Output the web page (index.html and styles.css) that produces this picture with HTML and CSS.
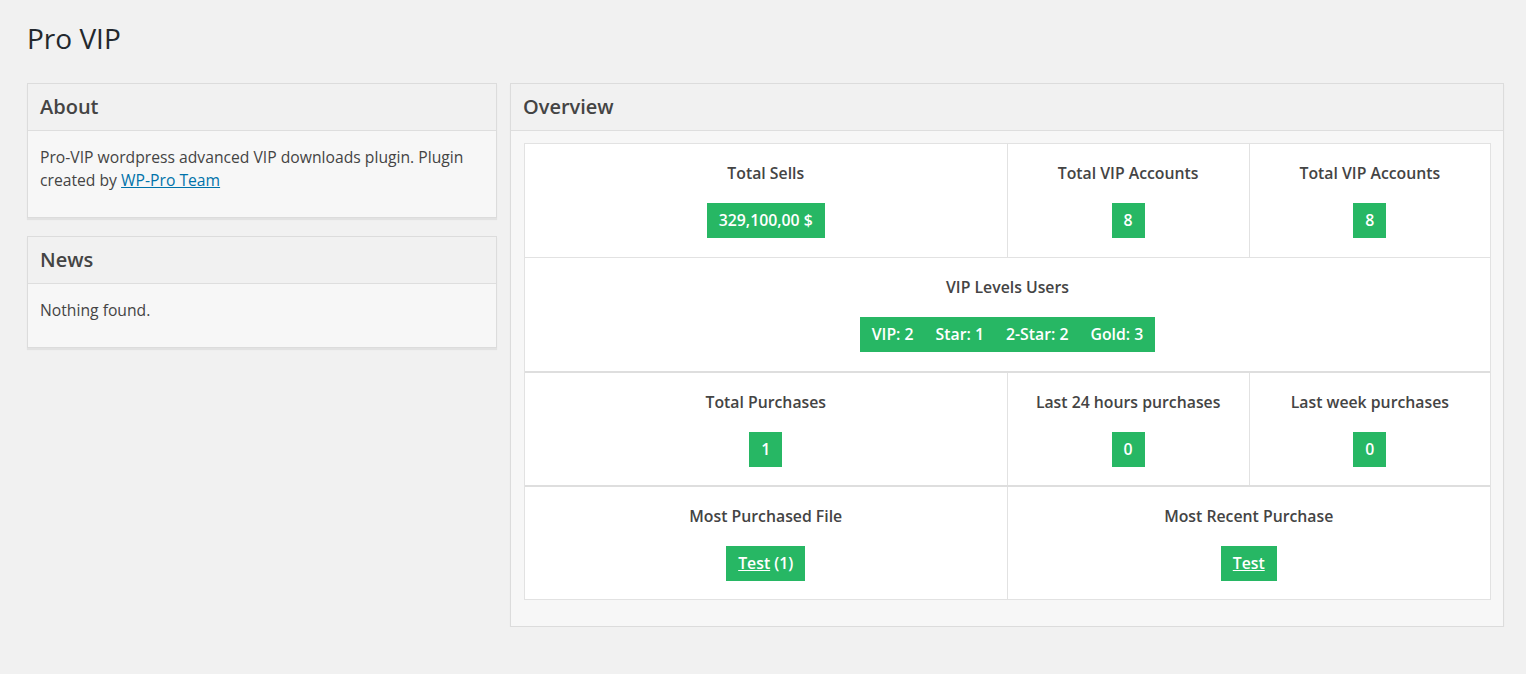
FILE: index.html
```html
<!DOCTYPE html>
<html>
<head>
<meta charset="utf-8">
<link rel="stylesheet" href="styles.css">
</head>
<body>
<div class="wrap">
  <h1 class="page-title">Pro VIP</h1>
  <div class="columns">
    <div class="side">
      <div class="box">
        <div class="box-head">About</div>
        <div class="box-body">Pro-VIP wordpress advanced VIP downloads plugin. Plugin created by <a href="#">WP-Pro Team</a></div>
      </div>
      <div class="box">
        <div class="box-head">News</div>
        <div class="box-body">Nothing found.</div>
      </div>
    </div>
    <div class="main">
      <div class="box">
        <div class="box-head">Overview</div>
        <div class="box-body overview">
          <div class="stats">
            <div class="row row-first">
              <div class="cell half"><div class="label">Total Sells</div><span class="badge">329,100,00 $</span></div>
              <div class="cell quarter"><div class="label">Total VIP Accounts</div><span class="badge">8</span></div>
              <div class="cell quarter"><div class="label">Total VIP Accounts</div><span class="badge">8</span></div>
            </div>
            <div class="row">
              <div class="cell full"><div class="label">VIP Levels Users</div><span class="badge levels"><span>VIP: 2</span><span>Star: 1</span><span>2-Star: 2</span><span>Gold: 3</span></span></div>
            </div>
            <div class="row row-thick">
              <div class="cell half"><div class="label">Total Purchases</div><span class="badge">1</span></div>
              <div class="cell quarter"><div class="label">Last 24 hours purchases</div><span class="badge">0</span></div>
              <div class="cell quarter"><div class="label">Last week purchases</div><span class="badge">0</span></div>
            </div>
            <div class="row row-thick">
              <div class="cell half"><div class="label">Most Purchased File</div><span class="badge"><a href="#">Test</a> (1)</span></div>
              <div class="cell half2"><div class="label">Most Recent Purchase</div><span class="badge"><a href="#">Test</a></span></div>
            </div>
          </div>
        </div>
      </div>
    </div>
  </div>
</div>
</body>
</html>
```
FILE: styles.css
```css
html, body {
  margin: 0;
  padding: 0;
  background: #f1f1f1;
  font-family: "Open Sans", "Noto Sans", sans-serif;
  color: #444;
}
.wrap {
  padding: 20px 22px 0 27px;
}
.page-title {
  margin: 0;
  font-size: 28px;
  font-weight: 400;
  line-height: 36px;
  color: #23282d;
}
.columns {
  display: flex;
  gap: 13px;
  margin-top: 27px;
  align-items: flex-start;
}
.side {
  width: 470px;
  display: flex;
  flex-direction: column;
  gap: 18px;
}
.main {
  flex: 1;
}
.box {
  border: 1px solid #dcdcdc;
  box-shadow: 0 2px 1px rgba(0,0,0,0.06);
  background: #f7f7f7;
}
.box-head {
  height: 46px;
  line-height: 46px;
  padding: 0 12px;
  font-size: 20px;
  font-weight: 600;
  color: #444;
  background: #f1f1f1;
  border-bottom: 1px solid #dedede;
}
.box-body {
  padding: 15px 12px 25px;
  font-size: 15.7px;
  line-height: 23px;
  color: #444;
}
.box-body a {
  color: #0073aa;
}
.box-body.overview {
  padding: 12px 12px 26px 13px;
}
.stats {
  background: #fff;
  border: 1px solid #e2e2e2;
}
.row {
  display: flex;
}
.row + .row {
  border-top: 1px solid #e2e2e2;
}
.row.row-thick {
  border-top: 2px solid #dedede;
}
.cell {
  text-align: center;
  padding: 18px 0 19px;
  box-sizing: border-box;
}
.row-thick .cell {
  padding-bottom: 18px;
}
.half { width: 50%; border-right: 1px solid #e2e2e2; }
.half2 { width: 50%; }
.quarter { width: 25%; }
.quarter + .quarter { border-left: 1px solid #e2e2e2; }
.full { width: 100%; }
.label {
  font-size: 15.8px;
  font-weight: 600;
  line-height: 22px;
  color: #444;
  margin-bottom: 19px;
}
.badge {
  display: inline-block;
  background: #27b764;
  color: #fff;
  font-size: 15.8px;
  font-weight: 600;
  line-height: 35px;
  height: 35px;
  padding: 0 12px;
  vertical-align: top;
}
.badge a {
  color: #fff;
  text-decoration: underline;
}
.levels span + span {
  margin-left: 22px;
}
```
